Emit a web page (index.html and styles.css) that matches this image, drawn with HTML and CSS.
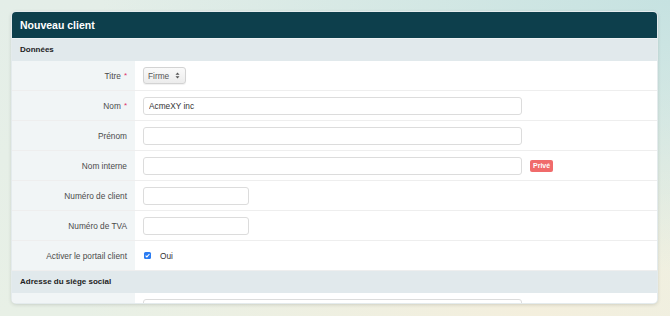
FILE: index.html
```html
<!DOCTYPE html>
<html lang="fr">

<head>
  <meta charset="UTF-8">
  <meta name="viewport" content="width=device-width, initial-scale=1.0">
  <title>Nouveau client</title>
  <link rel="stylesheet" href="styles.css">
</head>

<body>
  <div class="c-panel">
    <h1 class="c-panel__title">Nouveau client</h1>

    <div class="c-form">
      <h2 class="c-form__section">Données</h2>

      <div class="c-form__row">
        <label class="c-form__label">Titre <span class="c-form__req">*</span></label>
        <div class="c-form__field">
          <span class="c-select">Firme
            <svg class="c-select__arrows" width="5" height="7" viewBox="0 0 5 7">
              <path d="M2.5 0.5 L4.5 2.8 H0.5 Z M2.5 6.5 L4.5 4.2 H0.5 Z" fill="#555" />
            </svg>
          </span>
        </div>
      </div>

      <div class="c-form__row">
        <label class="c-form__label">Nom <span class="c-form__req">*</span></label>
        <div class="c-form__field">
          <input class="c-input" type="text" value="AcmeXY inc">
        </div>
      </div>

      <div class="c-form__row">
        <label class="c-form__label">Prénom</label>
        <div class="c-form__field">
          <input class="c-input" type="text">
        </div>
      </div>

      <div class="c-form__row">
        <label class="c-form__label">Nom interne</label>
        <div class="c-form__field">
          <input class="c-input" type="text">
          <span class="c-badge">Privé</span>
        </div>
      </div>

      <div class="c-form__row">
        <label class="c-form__label">Numéro de client</label>
        <div class="c-form__field">
          <input class="c-input c-input--short" type="text">
        </div>
      </div>

      <div class="c-form__row">
        <label class="c-form__label">Numéro de TVA</label>
        <div class="c-form__field">
          <input class="c-input c-input--short" type="text">
        </div>
      </div>

      <div class="c-form__row">
        <label class="c-form__label">Activer le portail client</label>
        <div class="c-form__field">
          <span class="c-check">
            <svg width="7" height="7" viewBox="0 0 7 7">
              <path d="M1.6 3.6 L2.9 4.9 L5.4 2" fill="none" stroke="#fff" stroke-width="1.1" />
            </svg>
          </span>
          <span class="c-check__text">Oui</span>
        </div>
      </div>

      <h2 class="c-form__section">Adresse du siège social</h2>

      <div class="c-form__row">
        <label class="c-form__label"></label>
        <div class="c-form__field">
          <input class="c-input" type="text">
        </div>
      </div>
    </div>
  </div>
</body>

</html>
```

FILE: styles.css
```css
*,
*::before,
*::after {
  margin: 0;
  box-sizing: border-box;
}

html,
body {
  height: 100%;
}

body {
  padding: 12px 13px 0 12px;
  font-family: "Liberation Sans", Arial, sans-serif;
  color: #333;
  background:
    radial-gradient(ellipse at 100% 0%, #c6e2e1 0%, rgba(198, 226, 225, 0) 60%),
    radial-gradient(ellipse at 80% 100%, #f4efdd 0%, rgba(244, 239, 221, 0) 60%),
    linear-gradient(180deg, #e4eee8 0%, #e8f0e6 100%);
  overflow: hidden;
}

.c-panel {
  height: 291px;
  background: #fff;
  border-radius: 4px;
  overflow: hidden;
  box-shadow: 0 0 0 1px #e4ebed, 0 1px 4px rgba(0, 0, 0, .2);
}

.c-panel__title {
  height: 26px;
  padding: 0 8px;
  background: #0d3f4c;
  color: #fff;
  font-size: 10.5px;
  font-weight: bold;
  line-height: 26px;
}

.c-form__section {
  height: 22px;
  padding: 0 8px;
  background: #e1e9ec;
  font-size: 8px;
  font-weight: bold;
  line-height: 22px;
  color: #222;
}

.c-form__section:first-of-type {
  height: 23px;
  border-top: 1px solid #eef3f4;
  line-height: 21px;
}

.c-form__row {
  display: grid;
  grid-template-columns: 123px 1fr;
  height: 30px;
  border-bottom: 1px solid #eeeeee;
}

.c-form__label {
  display: flex;
  align-items: center;
  justify-content: flex-end;
  gap: 3px;
  padding-right: 8px;
  background: #f1f5f6;
  font-size: 8.3px;
  color: #4a4a4a;
}

.c-form__req {
  color: #e0306a;
  font-size: 8px;
}

.c-form__field {
  display: flex;
  align-items: center;
  gap: 8px;
  padding: 0 8px;
}

.c-input {
  width: 379px;
  height: 18px;
  padding: 0 5px;
  border: 1px solid #dcdcdc;
  border-radius: 3px;
  font-family: inherit;
  font-size: 8.3px;
  color: #333;
  background: #fff;
}

.c-input--short {
  width: 106px;
}

.c-select {
  display: flex;
  align-items: center;
  justify-content: space-between;
  width: 43px;
  height: 17px;
  padding: 0 5px 0 4px;
  border: 1px solid #d3d3d3;
  border-radius: 3px;
  background: linear-gradient(#fafafa, #ececec);
  box-shadow: 0 1px 1px rgba(0, 0, 0, .06);
  font-size: 8.3px;
  color: #555;
}

.c-badge {
  padding: 0 3px;
  height: 12px;
  line-height: 12px;
  border-radius: 2px;
  background: #f06b6b;
  color: #fff;
  font-size: 7px;
  font-weight: bold;
}

.c-check {
  display: flex;
  width: 7px;
  height: 7px;
  margin-left: 1px;
  border-radius: 1.5px;
  background: #2b7cf2;
}

.c-check__text {
  margin-left: 1px;
  font-size: 8.3px;
  color: #333;
}
```
